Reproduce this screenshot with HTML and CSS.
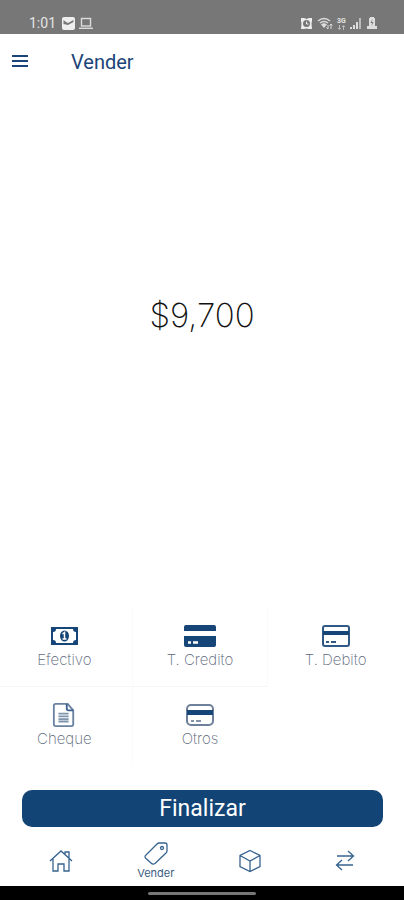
FILE: index.html
```html
<!DOCTYPE html>
<html lang="es">

<head>
    <meta charset="UTF-8">
    <meta name="viewport" content="width=device-width, initial-scale=1.0">
    <title>Vender</title>
    <link rel="stylesheet" href="styles.css">
</head>

<body>
    <div class="status">
        <span class="time">1:01</span>
        <svg width="13" height="13" viewBox="0 0 13 13">
            <rect x="0" y="0" width="13" height="13" rx="2" fill="#eee"/>
            <path d="M1.5 7V3L4 5L6 6L11.5 3V5L6 8Z" fill="#777"/>
        </svg>
        <svg width="14" height="13" viewBox="0 0 14 13" fill="none" stroke="#ddd" stroke-width="1.4">
            <rect x="2.5" y="1.5" width="9" height="7.5"/>
            <path d="M0 11.3H14"/>
        </svg>
        <div class="status-right">
            <svg width="13" height="13" viewBox="0 0 13 13">
                <path d="M1 1H4L6.500 2L9 1H12V4L11.500 6.500L12 12H9L6.500 11.500L4 12H1L1.500 6.500L1 4Z" fill="#eee"/>
                <circle cx="6.500" cy="6.500" r="3.500" fill="#777"/>
                <path d="M6.500 4.500V7H8.500" fill="none" stroke="#eee"/>
            </svg>
            <svg width="16" height="13" viewBox="0 0 16 13" fill="none" stroke="#ddd" stroke-width="1.5">
                <path d="M1 4Q7 -1 13 4M3 6Q7 3 11 6"/>
                <path d="M4 7.500Q7 5 10 7.500L7 11Z" fill="#ddd" stroke="none"/>
                <path d="M11 8V12M9.500 10.500L11 12M14 12V7M12.500 8.500L14 7L15.500 8.500" stroke-width="1"/>
            </svg>
            <div class="network">
                <span>3G</span>
                <svg width="9" height="5" viewBox="0 0 9 5" fill="none" stroke="#bbb">
                    <path d="M2.500 0V4M1 3L2.500 4.500L4 3M6.500 5V1M5 2L6.500 0.500L8 2"/>
                </svg>
            </div>
            <svg width="13" height="13" viewBox="0 0 13 13">
                <path d="M0 10h2v2H0zM3 8h2v4H3zM6 5h2v7H6z" fill="#ddd"/>
                <path d="M9 1h2v11H9z" fill="#bbb"/>
            </svg>
            <svg width="10" height="13" viewBox="0 0 10 13">
                <path d="M3 0H7V1H8V9H10V12H0V9H2V1H3Z" fill="#ddd"/>
                <path d="M5.500 2L3.500 6H5L4.500 9L6.500 5H5Z" fill="#777"/>
            </svg>
        </div>
    </div>

    <header>
        <button class="menu" aria-label="Menu">
            <svg width="16" height="14" viewBox="0 0 16 14" stroke="#1b4478" stroke-width="2">
                <path d="M0 1H16M0 6H16M0 11H16"/>
            </svg>
        </button>
        <h1>Vender</h1>
    </header>

    <main>
        <div class="amount">$9,700</div>

        <div class="methods">
            <button class="method">
                <svg width="28" height="24" viewBox="0 0 28 24">
                    <rect x="1" y="3" width="27" height="18" fill="#164578"/>
                    <path d="M6 5H23Q23 8 26 8V16Q23 16 23 19H6Q6 16 3 16V8Q6 8 6 5Z" fill="#fff"/>
                    <ellipse cx="14.500" cy="12" rx="4.500" ry="5.500" fill="#164578"/>
                    <path d="M12.500 10L14.500 8.500V15M12.500 15H16.500" fill="none" stroke="#fff" stroke-width="1.500"/>
                </svg>
                <span>Efectivo</span>
            </button>
            <button class="method">
                <svg width="32" height="24" viewBox="0 0 32 24">
                    <path d="M0 7V3Q0 1 2 1H30Q32 1 32 3V7Z" fill="#164578"/>
                    <path d="M0 12H32V21Q32 23 30 23H2Q0 23 0 21Z" fill="#164578"/>
                    <path d="M4 18.500H7M9 18.500H14" stroke="#fff" stroke-width="2.500"/>
                </svg>
                <span>T. Credito</span>
            </button>
            <button class="method">
                <svg width="28" height="24" viewBox="0 0 28 24">
                    <rect x="1" y="2" width="26" height="20" rx="2" fill="none" stroke="#315985" stroke-width="2"/>
                    <path d="M1 9H27" stroke="#164578" stroke-width="4"/>
                    <path d="M4 18H7M9 18H14" stroke="#315985" stroke-width="2"/>
                </svg>
                <span>T. Debito</span>
            </button>
            <button class="method">
                <svg width="24" height="24" viewBox="0 0 24 26">
                    <path d="M3 1H16L22 8V23Q22 25 20 25H3Q1 25 1 23V3Q1 1 3 1Z" fill="none" stroke="#6b82a1" stroke-width="2"/>
                    <path d="M15 1V6Q15 8 17 8H22" fill="none" stroke="#3c6290" stroke-width="2"/>
                    <path d="M6 11.500H17M6 14.500H17M6 17.500H17M6 20H17" stroke="#7f94ad" stroke-width="2"/>
                </svg>
                <span>Cheque</span>
            </button>
            <button class="method">
                <svg width="28" height="24" viewBox="0 0 28 24">
                    <rect x="1" y="2" width="26" height="20" rx="4" fill="none" stroke="#6f809b" stroke-width="2"/>
                    <path d="M1 9.500H27" stroke="#164578" stroke-width="5"/>
                    <path d="M5 18H8M10 18H15" stroke="#8392a8" stroke-width="2"/>
                </svg>
                <span>Otros</span>
            </button>
        </div>

        <button class="finish">Finalizar</button>
    </main>

    <nav>
        <a href="#" aria-label="Inicio">
            <svg width="24" height="24" viewBox="0 0 24 24">
                <path d="M1 12L12 2L23 12M4 10V22H9V15H15V22H20V10M16 5V3H20V9"/>
            </svg>
        </a>
        <a href="#" class="active">
            <svg width="24" height="24" viewBox="0 0 24 24">
                <path d="M15 1H21Q23 1 23 3V9Q23 10 22 11L11 21.500Q9 23 7 21L2 16.500Q0 14.500 2 13L13 2Q14 1 15 1Z"/>
                <circle cx="18" cy="6" r="1.500"/>
            </svg>
            <span>Vender</span>
        </a>
        <a href="#" aria-label="Productos">
            <svg width="24" height="24" viewBox="0 0 24 24">
                <path d="M12 1.500L22 6.500V17.500L12 22.500L2 17.500V6.500ZM2 6.500L12 12L22 6.500M12 12V22.500"/>
            </svg>
        </a>
        <a href="#" aria-label="Movimientos">
            <svg width="24" height="24" viewBox="0 0 24 24">
                <path d="M4 7H20M15 2L20.500 7L15 12M20 16H4M9 11L3.500 16L9 21"/>
            </svg>
        </a>
    </nav>

    <div class="gesture"><div class="handle"></div></div>
</body>

</html>
```
FILE: styles.css
```css
* {
    box-sizing: border-box;
}

body {
    margin: 0;
    min-height: 100vh;
    display: flex;
    flex-direction: column;
    background-color: #fff;
    font-family: Roboto, sans-serif;
    overflow-x: hidden;
}

button {
    border: none;
    background: none;
    padding: 0;
    font-family: inherit;
    cursor: pointer;
}

svg {
    display: block;
}

/* barra de estado */
.status {
    height: 34px;
    display: flex;
    align-items: center;
    gap: 4px;
    padding: 12px 27px 0 29px;
    background-color: #777;
    color: #e4e4e4;
}

.time {
    font-size: 14px;
    margin-right: 2px;
}

.status-right {
    margin-left: auto;
    display: flex;
    align-items: center;
    gap: 4px;
}

.network {
    display: flex;
    flex-direction: column;
    align-items: center;
    width: 9px;
    font-size: 7px;
    line-height: 8px;
    font-weight: bold;
}

header {
    height: 56px;
    display: flex;
    align-items: center;
    gap: 43px;
    padding: 0 12px;
}

h1 {
    margin: 0;
    font-size: 20px;
    font-weight: 400;
    color: #1b4478;
}

main {
    flex: 1;
    display: flex;
    flex-direction: column;
}

.amount {
    flex: 1;
    display: flex;
    align-items: center;
    justify-content: center;
    padding-bottom: 68px;
    font-family: Inter, sans-serif;
    font-size: 33px;
    font-weight: 200;
    color: #111;
}

.methods {
    display: grid;
    grid-template-columns: repeat(3, 1fr);
    margin-left: -3px;
}

.method {
    height: 79px;
    display: flex;
    flex-direction: column;
    align-items: center;
    justify-content: center;
    gap: 2px;
    border-right: 1px solid #fafafa;
    border-bottom: 1px solid transparent;
    font-family: Inter, sans-serif;
    font-size: 15px;
    font-weight: 200;
    line-height: 20px;
    color: #5d687c;
}

.method:nth-child(-n+2) {
    border-bottom-color: #f6f6f6;
}

.method:nth-child(3),
.method:nth-child(5) {
    border-right-color: transparent;
}

.finish {
    height: 37px;
    margin: 24px 21px 9px 22px;
    border-radius: 10px;
    background-color: #124475;
    color: #fff;
    font-size: 23px;
}

nav {
    height: 50px;
    display: flex;
    padding: 0 12px 0 14px;
}

nav a {
    flex: 1;
    display: flex;
    flex-direction: column;
    align-items: center;
    justify-content: center;
    font-family: Inter, sans-serif;
    font-size: 11px;
    line-height: 14px;
    color: #3a5c80;
    text-decoration: none;
}

nav svg {
    fill: none;
    stroke: #36638f;
    stroke-width: 1.3;
}

.gesture {
    height: 14px;
    padding-top: 6px;
    background-color: #000;
}

.handle {
    width: 108px;
    height: 3px;
    margin: 0 auto;
    border-radius: 2px;
    background-color: #777;
}
```
